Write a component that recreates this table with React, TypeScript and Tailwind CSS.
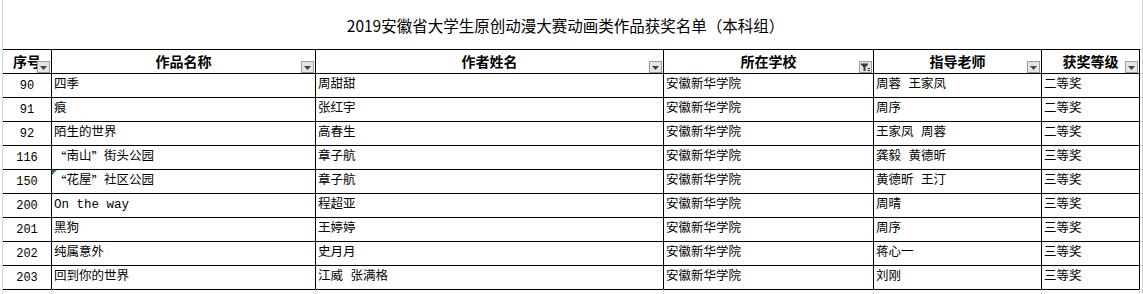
import React from "react"

const grid = "border-[#d4d4d4]"

const cols = [
  { w: "w-[49px]", label: "序号" },
  { w: "w-[264px]", label: "作品名称" },
  { w: "w-[348px]", label: "作者姓名" },
  { w: "w-[210px]", label: "所在学校", filtered: true },
  { w: "w-[168px]", label: "指导老师" },
  { w: "w-[98px]", label: "获奖等级" },
]

const rows = [
  ["90", "四季", "周甜甜", "安徽新华学院", "周蓉 王家凤", "二等奖"],
  ["91", "痕", "张红宇", "安徽新华学院", "周序", "二等奖"],
  ["92", "陌生的世界", "高春生", "安徽新华学院", "王家凤 周蓉", "二等奖"],
  ["116", "“南山”街头公园", "章子航", "安徽新华学院", "龚毅 黄德昕", "三等奖"],
  ["150", "“花屋”社区公园", "章子航", "安徽新华学院", "黄德昕 王汀", "三等奖"],
  ["200", "On the way", "程超亚", "安徽新华学院", "周晴", "三等奖"],
  ["201", "黑狗", "王婷婷", "安徽新华学院", "周序", "三等奖"],
  ["202", "纯属意外", "史月月", "安徽新华学院", "蒋心一", "三等奖"],
  ["203", "回到你的世界", "江威 张满格", "安徽新华学院", "刘刚", "三等奖"],
]

function FilterButton({ filtered }: { filtered?: boolean }) {
  return (
    <span className="absolute right-[1px] bottom-0 w-[13px] h-[12px] border border-[#9c9c9c] bg-[#e6e6e8] flex items-center justify-center">
      {filtered ? (
        <svg width="11" height="10" viewBox="0 0 11 10">
          <path d="M1 1.5h7v1.5L5.5 5v4h-2V5L1 3z" fill="#3a3a3a" />
          <rect x="7.5" y="6" width="2.5" height="1" fill="#3a3a3a" />
          <rect x="7.5" y="8" width="2.5" height="1" fill="#3a3a3a" />
        </svg>
      ) : (
        <svg width="7" height="4" viewBox="0 0 7 4" className="mt-[2px]">
          <polygon points="0,0 7,0 3.5,4" fill="#444" />
        </svg>
      )}
    </span>
  )
}

// sheet gridlines left and right of the table
function Gutters({ children, ticks = true }: { children: React.ReactNode; ticks?: boolean }) {
  return (
    <>
      <div className={`w-[2px] shrink-0 ${ticks ? "border-t" : ""} ${grid}`} />
      <div className="w-px shrink-0 bg-[#d4d4d4]" />
      {children}
      <div className={`w-[2px] shrink-0 ${ticks ? "border-t" : ""} ${grid}`} />
      <div className="w-px shrink-0 bg-[#d4d4d4]" />
    </>
  )
}

// curly quotes are full width in the sheet's font
function CellText({ value }: { value: string }) {
  return (
    <>
      {value.split(/([“”])/).map((part, i) =>
        part === "“" || part === "”" ? (
          <span key={i} className="font-['Noto_Sans_CJK_SC',sans-serif]">
            {part}
          </span>
        ) : (
          part
        )
      )}
    </>
  )
}

export default function App() {
  return (
    <div className="w-[1143px] h-[294px] bg-white overflow-hidden text-black">
      {/* title */}
      <div className="flex h-[49px]">
        <Gutters ticks={false}>
          <div className="w-[1137px] shrink-0 flex items-center justify-center pt-[2px] pr-[12px] text-[15.5px] font-['Noto_Sans_CJK_SC',sans-serif]">
            2019安徽省大学生原创动漫大赛动画类作品获奖名单（本科组）
          </div>
        </Gutters>
      </div>

      {/* header */}
      <div className="flex h-[24px]">
        <Gutters>
          {cols.map((c) => (
            <div
              key={c.label}
              className={`${c.w} shrink-0 relative flex items-center justify-center border-t border-r border-black text-[14px] font-bold font-['Noto_Sans_CJK_SC',sans-serif]`}
            >
              {c.label}
              <FilterButton filtered={c.filtered} />
            </div>
          ))}
        </Gutters>
      </div>

      {/* data */}
      {rows.map((r) => (
        <div key={r[0]} className="flex h-[24px]">
          <Gutters>
            {r.map((v, i) => (
              <div
                key={i}
                className={`${cols[i].w} shrink-0 relative flex items-center border-t border-r border-black whitespace-nowrap font-['Liberation_Mono','Noto_Sans_CJK_SC',monospace] ${
                  i === 0 ? "justify-center pt-[1px] text-[12px]" : "pl-[2px] text-[12.5px]"
                } ${v === "On the way" ? "text-[11.5px]" : ""}`}
              >
                {i === 1 && r[0] === "150" && (
                  <svg width="5" height="5" viewBox="0 0 5 5" className="absolute left-0 top-0">
                    <polygon points="0,0 5,0 0,5" fill="#2e8b2e" />
                  </svg>
                )}
                <CellText value={v} />
              </div>
            ))}
          </Gutters>
        </div>
      ))}

      {/* below table: gridlines only */}
      <div className="flex h-[5px]">
        <Gutters>
          {cols.map((c) => (
            <div key={c.label} className={`${c.w} shrink-0 border-t border-t-black border-r ${grid}`} />
          ))}
        </Gutters>
      </div>
    </div>
  )
}
